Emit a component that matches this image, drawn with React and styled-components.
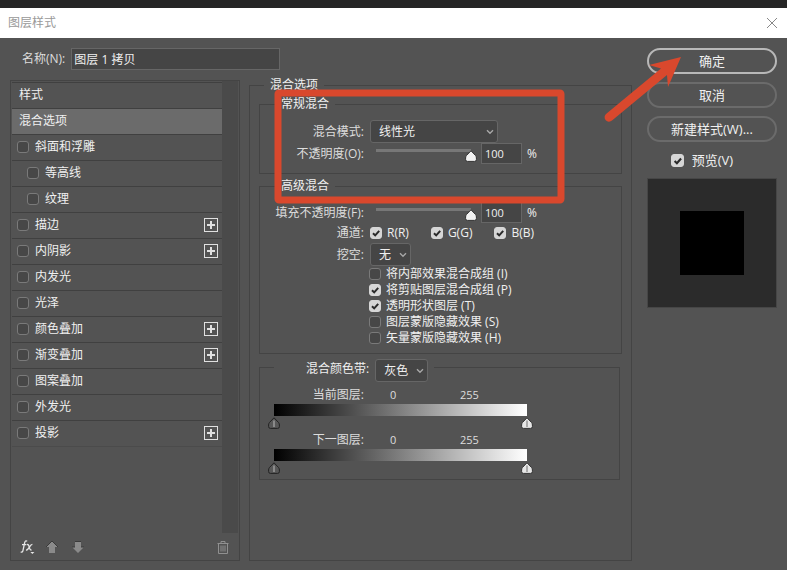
import { useState } from 'react';
import styled, { createGlobalStyle } from 'styled-components';

const GlobalStyle = createGlobalStyle`
  * {
    box-sizing: border-box;
  }

  body {
    margin: 0;
    background-color: #535353;
    color: #f0f0f0;
    font-family: 'Open Sans', 'Noto Sans CJK SC', sans-serif;
    font-size: 12px;
    line-height: 16px;
  }

  input,
  select,
  button {
    font: inherit;
    color: inherit;
    margin: 0;
  }
`;

const svgUrl = svg => `url("data:image/svg+xml,${encodeURIComponent(svg)}")`;

const checkMark = svgUrl(
  `<svg xmlns="http://www.w3.org/2000/svg" viewBox="0 0 12 12"><path d="M3 6.2 5.2 8.4 9.2 3.8" fill="none" stroke="#2b2b2b" stroke-width="2"/></svg>`
);

const knob = (fill, stroke, line) =>
  svgUrl(
    `<svg xmlns="http://www.w3.org/2000/svg" viewBox="0 0 12 12"><path d="M6 .8 10.6 5.6Q11.4 6.6 11.4 8V9.6Q11.4 11.4 9.6 11.4H2.4Q.6 11.4 .6 9.6V8Q.6 6.6 1.4 5.6Z" fill="${fill}" stroke="${stroke}"/><path d="M6 3.5V10" stroke="${line}" stroke-width="2"/></svg>`
  );

const Window = styled.div`
  position: relative;
  min-height: 100vh;
  display: flex;
  flex-direction: column;
  border-top: 8px solid #262626;
`;

const TitleBar = styled.header`
  height: 30px;
  padding: 0 9px 0 8px;
  display: flex;
  align-items: center;
  justify-content: space-between;
  background-color: #fff;
  color: #999;

  button {
    display: flex;
    padding: 0;
    border: none;
    background: none;
    color: #888;
  }
`;

const Body = styled.div`
  flex: 1;
  display: grid;
  grid-template-columns: 1fr 130px;
  gap: 15px;
  padding: 10px 10px 9px;
`;

const Main = styled.main`
  display: flex;
  flex-direction: column;
  gap: 7px;
`;

const NameRow = styled.label`
  display: flex;
  align-items: center;
  gap: 6px;
  padding-left: 12px;
  color: #ddd;

  input {
    width: 209px;
    height: 22px;
    padding: 0 2px;
    border: 1px solid #666;
    background-color: #454545;
    color: #f0f0f0;
  }
`;

const Panels = styled.div`
  flex: 1;
  display: grid;
  grid-template-columns: 230px 1fr;
  gap: 9px;
`;

const StylePanel = styled.section`
  display: flex;
  flex-direction: column;
  margin-top: 3px;
  border: 1px solid #444;
`;

const StyleScroll = styled.div`
  flex: 1;
  display: grid;
  grid-template-columns: 1fr 16px;
  padding: 0 1px;
`;

const StyleList = styled.ul`
  list-style: none;
  margin: 1px 0 0;
  padding: 0;
`;

const StyleItem = styled.li`
  display: flex;
  align-items: center;
  height: 26px;
  padding: 0 4px 1px ${props => (props.$plain ? 7 : props.$sub ? 15 : 5)}px;
  border-top: 1px solid #404040;
  background-color: ${props => (props.$selected ? '#6b6b6b' : 'transparent')};

  &:last-child {
    height: 27px;
    border-bottom: 1px solid #4b4b4b;
  }
`;

const ScrollTrack = styled.div`
  background-color: #4a4a4a;
`;

const PlusButton = styled.button`
  display: flex;
  margin-left: auto;
  padding: 0;
  border: none;
  background: none;
`;

const StyleFooter = styled.footer`
  display: flex;
  align-items: center;
  gap: 11px;
  height: 27px;
  padding: 1px 10px 0 9px;

  button {
    display: flex;
    padding: 0;
    border: none;
    background: none;
    color: #909090;
  }

  button:last-child {
    margin-left: auto;
  }
`;

const CheckLabel = styled.label`
  display: flex;
  align-items: center;
  gap: ${props => props.$gap || 5}px;
`;

const CheckBox = styled.input.attrs({ type: 'checkbox' })`
  appearance: none;
  flex: none;
  width: ${props => props.$size || 12}px;
  height: ${props => props.$size || 12}px;
  border: 1px solid #7a7a7a;
  border-radius: 3px;
  background-color: #474747;

  &:checked {
    border-color: #d6d6d6;
    background: #d6d6d6 ${checkMark} center / 12px 12px no-repeat;
  }
`;

const Group = styled.fieldset`
  min-width: 0;
  margin: 0;
  padding: 0;
  border: 1px solid #444;

  legend {
    padding: 0 6px;
    margin-left: 15px;
  }
`;

const OptionsGroup = styled(Group)`
  padding: 3px 9px 0;

  > legend {
    margin-left: 5px;
  }
`;

const BlendGroup = styled(Group)`
  padding: 8px 0 ${props => props.$bottom}px;
  margin-bottom: ${props => props.$gap}px;
`;

const BlendIfGroup = styled(Group)`
  margin-right: 2px;
  padding: 10px 0 3px 14px;

  > legend {
    display: flex;
    align-items: flex-start;
    gap: 6px;
    height: 17px;
    margin-left: 0;
    padding: 0 6px 0 32px;
  }

  > legend label {
    line-height: 20px;
  }
`;

const Row = styled.div`
  display: grid;
  grid-template-columns: 104px 1fr;
  align-items: center;
  gap: 6px;
  height: ${props => props.$height}px;
`;

const RowLabel = styled.label`
  color: #ddd;
  text-align: right;
`;

const RowControls = styled.div`
  display: flex;
  align-items: center;
  gap: ${props => props.$gap || 4}px;
`;

const OptionList = styled.div`
  display: grid;
  grid-auto-rows: 16px;
  padding-left: 109px;
`;

const SelectBox = styled.span`
  display: inline-grid;
  align-items: center;
  flex: none;
  width: ${props => props.$width}px;

  select,
  svg {
    grid-area: 1 / 1;
  }

  select {
    appearance: none;
    width: 100%;
    height: 23px;
    padding: 0 0 0 8px;
    border: 1px solid #666;
    border-radius: 3px;
    background-color: #454545;
  }

  svg {
    justify-self: end;
    margin-right: 4px;
    pointer-events: none;
  }
`;

const Range = styled.input.attrs({ type: 'range' })`
  appearance: none;
  box-sizing: content-box;
  width: 107px;
  height: 12px;
  padding: 5px 0 1px;
  background: linear-gradient(#777, #777) 6px 4px / calc(100% - 12px) 3px
    no-repeat;

  &::-webkit-slider-thumb {
    appearance: none;
    width: 12px;
    height: 12px;
    background: ${knob('#f2f2f2', '#333', '#f2f2f2')};
  }
`;

const NumberInput = styled.input`
  width: 41px;
  height: 21px;
  padding: 0 3px;
  border: 1px solid #666;
  background-color: #454545;
  font-size: 11px;
`;

const Unit = styled.span`
  padding-left: 1px;
`;

const BlendCaption = styled.div`
  display: grid;
  grid-template-columns: 90px 58px 1fr;
  height: 18px;
  padding-top: 1px;
  color: #ddd;

  span {
    text-align: right;
  }

  output {
    padding-left: 26px;
    font-size: 11px;
  }

  output:last-child {
    padding-left: 38px;
  }
`;

const GradientBar = styled.div`
  width: 253px;
  height: 12px;
  background: linear-gradient(to right, #000, #fff);
`;

const BlendRange = styled.div`
  display: grid;
  width: 265px;
  margin: 1px 0 2px -6px;
`;

const BlendKnob = styled(Range)`
  grid-area: 1 / 1;
  width: 100%;
  padding: 0;
  background: none;
  pointer-events: none;

  &::-webkit-slider-thumb {
    pointer-events: auto;
    background: ${props =>
      props.$dark
        ? knob('#585858', '#222', '#8a8a8a')
        : knob('#e6e6e6', '#333', '#aaa')};
  }
`;

const Side = styled.aside`
  display: flex;
  flex-direction: column;
  gap: 8px;
  font-size: 13px;
`;

const ActionButton = styled.button`
  height: 26px;
  padding: 0;
  border: 2px solid ${props => (props.$primary ? '#b8b8b8' : '#6b6b6b')};
  border-radius: 13px;
  background: none;
`;

const PreviewToggle = styled.div`
  display: flex;
  justify-content: center;
  padding: 2px 0;
  margin-right: 20px;
`;

const Preview = styled.div`
  display: grid;
  place-items: center;
  height: 130px;
  border: 1px solid #464646;
  background-color: #2b2b2b;

  div {
    width: 64px;
    height: 64px;
    background-color: #000;
  }
`;

/* hand drawn marks lying over the dialog */
const Marks = styled.svg`
  position: absolute;
  top: -8px;
  left: 0;
  pointer-events: none;
`;

const styleItems = [
  { name: '斜面和浮雕' },
  { name: '等高线', sub: true },
  { name: '纹理', sub: true },
  { name: '描边', plus: true },
  { name: '内阴影', plus: true },
  { name: '内发光' },
  { name: '光泽' },
  { name: '颜色叠加', plus: true },
  { name: '渐变叠加', plus: true },
  { name: '图案叠加' },
  { name: '外发光' },
  { name: '投影', plus: true },
];

const blendOptions = [
  { name: '将内部效果混合成组 (I)', checked: false },
  { name: '将剪贴图层混合成组 (P)', checked: true },
  { name: '透明形状图层 (T)', checked: true },
  { name: '图层蒙版隐藏效果 (S)', checked: false },
  { name: '矢量蒙版隐藏效果 (H)', checked: false },
];

function Select({ id, width, options }) {
  return (
    <SelectBox $width={width}>
      <select id={id}>
        {options.map(option => (
          <option key={option}>{option}</option>
        ))}
      </select>
      <svg width="8" height="6" viewBox="0 0 8 6">
        <path
          d="M1 1.2 4 4.2 7 1.2"
          fill="none"
          stroke="#a8a8a8"
          strokeWidth="1.4"
        />
      </svg>
    </SelectBox>
  );
}

function Check({ name, checked, size, gap }) {
  return (
    <CheckLabel $gap={gap}>
      <CheckBox $size={size} defaultChecked={checked} />
      {name}
    </CheckLabel>
  );
}

function OpacityRow({ id, label }) {
  const [value, setValue] = useState(100);

  return (
    <Row $height={21}>
      <RowLabel htmlFor={id}>{label}</RowLabel>
      <RowControls>
        <Range
          aria-label={label}
          value={value}
          onChange={e => setValue(e.target.value)}
        />
        <NumberInput
          id={id}
          value={value}
          onChange={e => setValue(e.target.value)}
        />
        <Unit>%</Unit>
      </RowControls>
    </Row>
  );
}

function BlendIf({ label }) {
  const [low, setLow] = useState(0);
  const [high, setHigh] = useState(255);

  return (
    <>
      <BlendCaption>
        <span>{label}</span>
        <output>{low}</output>
        <output>{high}</output>
      </BlendCaption>
      <GradientBar />
      <BlendRange>
        <BlendKnob
          $dark
          aria-label={`${label} 黑`}
          max="255"
          value={low}
          onChange={e => setLow(e.target.value)}
        />
        <BlendKnob
          aria-label={`${label} 白`}
          max="255"
          value={high}
          onChange={e => setHigh(e.target.value)}
        />
      </BlendRange>
    </>
  );
}

function StyleSection() {
  return (
    <StylePanel>
      <StyleScroll>
        <StyleList>
          <StyleItem $plain>样式</StyleItem>
          <StyleItem $plain $selected>
            混合选项
          </StyleItem>
          {styleItems.map(item => (
            <StyleItem key={item.name} $sub={item.sub}>
              <Check name={item.name} gap={6} />
              {item.plus ? (
                <PlusButton type="button" aria-label={`添加${item.name}`}>
                  <svg width="14" height="14" viewBox="0 0 14 14">
                    <rect
                      x="0.5"
                      y="0.5"
                      width="13"
                      height="13"
                      fill="none"
                      stroke="#e0e0e0"
                    />
                    <path d="M7 3v8M3 7h8" stroke="#e0e0e0" strokeWidth="2" />
                  </svg>
                </PlusButton>
              ) : null}
            </StyleItem>
          ))}
        </StyleList>
        <ScrollTrack />
      </StyleScroll>
      <StyleFooter>
        <button type="button" aria-label="效果">
          <svg width="15" height="16" viewBox="0 0 15 16">
            <path
              d="M7.2 2.2Q5.2 1 4.6 4L3 11.4Q2.6 13.6.6 13M2 5.6h4.4M7 5.6q1.4-.4 2 1.6l.8 2.6q.6 1.6 1.8 1M12.4 5.4Q11 5.4 9.6 7.8L8 10Q7 11.2 6 11"
              fill="none"
              stroke="#e6e6e6"
              strokeWidth="1.3"
            />
            <path d="M10.4 13h4l-2 2z" fill="#e6e6e6" />
          </svg>
        </button>
        <button type="button" aria-label="上移">
          <svg width="12" height="12" viewBox="0 0 12 12">
            <path d="M6 0 12 6H9v6H3V6H0Z" fill="#8a8a8a" />
            <path d="M0 6 6 0 12 6" fill="none" stroke="#3a3a3a" />
          </svg>
        </button>
        <button type="button" aria-label="下移">
          <svg width="18" height="12" viewBox="-3 0 18 12">
            <path d="M3 0h6v6h3L6 12 0 6h3Z" fill="#8a8a8a" />
            <path d="M3 .5h6M0 6h3M9 6h3" stroke="#3a3a3a" />
          </svg>
        </button>
        <button type="button" aria-label="删除">
          <svg width="12" height="13" viewBox="0 0 12 13">
            <path
              d="M.5 2.5h11M4 2V.5h4V2M1.5 3v9.5h9V3M4 4.5v6M6 4.5v6M8 4.5v6"
              fill="none"
              stroke="currentColor"
            />
          </svg>
        </button>
      </StyleFooter>
    </StylePanel>
  );
}

function App() {
  return (
    <Window>
      <GlobalStyle />
      <TitleBar>
        图层样式
        <button type="button" aria-label="关闭">
          <svg width="12" height="12" viewBox="0 0 12 12">
            <path d="M1 1 11 11M11 1 1 11" stroke="currentColor" />
          </svg>
        </button>
      </TitleBar>
      <Body>
        <Main>
          <NameRow>
            名称(N):
            <input defaultValue="图层 1 拷贝" />
          </NameRow>
          <Panels>
            <StyleSection />
            <OptionsGroup>
              <legend>混合选项</legend>
              <BlendGroup $bottom={9} $gap={4}>
                <legend>常规混合</legend>
                <Row $height={23}>
                  <RowLabel htmlFor="mode">混合模式:</RowLabel>
                  <Select
                    id="mode"
                    width={128}
                    options={['线性光', '正常', '叠加']}
                  />
                </Row>
                <OpacityRow id="opacity" label="不透明度(O):" />
              </BlendGroup>
              <BlendGroup $bottom={7} $gap={5}>
                <legend>高级混合</legend>
                <OpacityRow id="fill" label="填充不透明度(F):" />
                <Row $height={20}>
                  <RowLabel as="span">通道:</RowLabel>
                  <RowControls $gap={22}>
                    <Check name="R(R)" checked />
                    <Check name="G(G)" checked />
                    <Check name="B(B)" checked />
                  </RowControls>
                </Row>
                <Row $height={23}>
                  <RowLabel htmlFor="knockout">挖空:</RowLabel>
                  <Select
                    id="knockout"
                    width={41}
                    options={['无', '浅', '深']}
                  />
                </Row>
                <OptionList>
                  {blendOptions.map(option => (
                    <Check
                      key={option.name}
                      name={option.name}
                      checked={option.checked}
                    />
                  ))}
                </OptionList>
              </BlendGroup>
              <BlendIfGroup>
                <legend>
                  <label htmlFor="band">混合颜色带:</label>
                  <Select
                    id="band"
                    width={53}
                    options={['灰色', '红', '绿', '蓝']}
                  />
                </legend>
                <BlendIf label="当前图层:" />
                <BlendIf label="下一图层:" />
              </BlendIfGroup>
            </OptionsGroup>
          </Panels>
        </Main>
        <Side>
          <ActionButton type="button" $primary>
            确定
          </ActionButton>
          <ActionButton type="button">取消</ActionButton>
          <ActionButton type="button">新建样式(W)...</ActionButton>
          <PreviewToggle>
            <Check name="预览(V)" checked size={13} gap={8} />
          </PreviewToggle>
          <Preview>
            <div />
          </Preview>
        </Side>
      </Body>
      <Marks width="700" height="220" viewBox="0 0 700 220">
        <rect
          x="278"
          y="93"
          width="283"
          height="107"
          rx="1"
          fill="none"
          stroke="#d9482d"
          strokeWidth="7"
          strokeLinejoin="round"
        />
        <path
          d="M681 57 649 65 661 68.5 606 114A4.2 4.2 0 0 0 612 120.5L667 75 668 87Z"
          fill="#d9482d"
        />
      </Marks>
    </Window>
  );
}

export default App;
